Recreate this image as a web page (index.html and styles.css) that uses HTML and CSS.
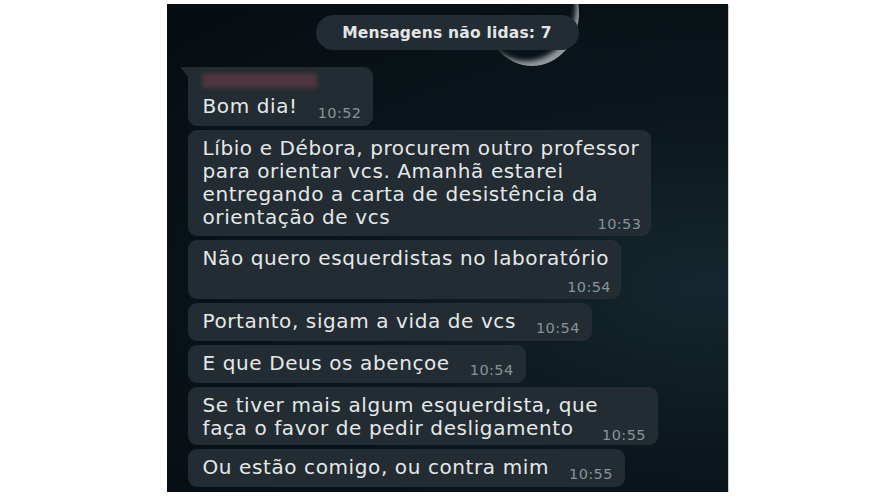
FILE: index.html
```html
<!DOCTYPE html>
<html lang="pt-BR">
<head>
    <meta charset="UTF-8">
    <meta name="viewport" content="width=device-width, initial-scale=1.0">
    <title>Mensagens</title>
    <link rel="stylesheet" href="styles.css">
</head>
<body>
    <div class="chat">
        <div class="moon"></div>
        <div class="unread">Mensagens não lidas: 7</div>
        <div class="messages">
            <div class="bubble first">
                <div class="sender"></div>
                <div class="row">
                    <span class="text">Bom dia!</span>
                    <span class="time">10:52</span>
                </div>
            </div>
            <div class="bubble stacked">
                <span class="text">Líbio e Débora, procurem outro professor<br>para orientar vcs. Amanhã estarei<br>entregando a carta de desistência da<br>orientação de vcs</span>
                <span class="time">10:53</span>
            </div>
            <div class="bubble stacked below">
                <span class="text">Não quero esquerdistas no laboratório</span>
                <span class="time">10:54</span>
            </div>
            <div class="bubble">
                <span class="text">Portanto, sigam a vida de vcs</span>
                <span class="time">10:54</span>
            </div>
            <div class="bubble">
                <span class="text">E que Deus os abençoe</span>
                <span class="time">10:54</span>
            </div>
            <div class="bubble two-lines">
                <span class="text">Se tiver mais algum esquerdista, que<br>faça o favor de pedir desligamento</span>
                <span class="time">10:55</span>
            </div>
            <div class="bubble">
                <span class="text">Ou estão comigo, ou contra mim</span>
                <span class="time">10:55</span>
            </div>
        </div>
    </div>
</body>
</html>
```

FILE: styles.css
```css
body {
    margin: 0;
    background-color: #ffffff;
    font-family: 'DejaVu Sans', sans-serif;
}
.chat {
    position: relative;
    width: 561px;
    height: 488px;
    margin: 4px auto 0;
    padding-top: 11px;
    box-sizing: border-box;
    overflow: hidden;
    background: radial-gradient(ellipse at 96% 58%, #14272e 0%, #0b161c 45%, #060c11 100%);
    box-shadow: 1px 1px 0 #c9cbcc;
}
/* reflet de lune derrière le bandeau */
.moon {
    position: absolute;
    left: 318px;
    top: -44px;
    width: 94px;
    height: 106px;
    border-radius: 50%;
    box-shadow: inset -6px -8px 5px -3px rgba(196, 200, 203, 0.75);
}
.unread {
    position: relative;
    width: 263px;
    height: 35px;
    margin: 0 auto;
    border-radius: 18px;
    background-color: #222c32;
    color: #e3e6e7;
    font-size: 15.5px;
    font-weight: 700;
    letter-spacing: 0.2px;
    display: flex;
    align-items: center;
    justify-content: center;
}
.messages {
    display: flex;
    flex-direction: column;
    align-items: flex-start;
    gap: 4px;
    padding: 17px 0 0 21px;
}
.bubble {
    position: relative;
    display: flex;
    align-items: flex-end;
    padding: 7px 12px 8px 15px;
    background-color: #222c32;
    border-radius: 9px;
}
.bubble.first {
    display: block;
    border-top-left-radius: 0;
}
.bubble.first::before {
    content: '';
    position: absolute;
    left: -8px;
    top: 0;
    border-top: 10px solid #222c32;
    border-left: 8px solid transparent;
}
.sender {
    width: 115px;
    height: 15px;
    margin: -1px 0 7px -1px;
    background-color: #4f3541;
    filter: blur(2px);
}
.row {
    display: flex;
    align-items: flex-end;
}
.text {
    font-size: 20px;
    line-height: 23px;
    letter-spacing: 0.6px;
    color: #e5e8e9;
}
.time {
    margin: 0 0 -3px 20px;
    font-size: 14.5px;
    line-height: 16px;
    letter-spacing: 0.4px;
    color: #8a9398;
}
.bubble.stacked {
    flex-direction: column;
    align-items: flex-start;
    padding-bottom: 4px;
}
.stacked .time {
    align-self: flex-end;
    margin: -13px -2px 0 0;
}
.stacked.below .time {
    margin-top: 9px;
}
.bubble.two-lines {
    padding-bottom: 5px;
}
.two-lines .time {
    margin-left: 4px;
}
```
